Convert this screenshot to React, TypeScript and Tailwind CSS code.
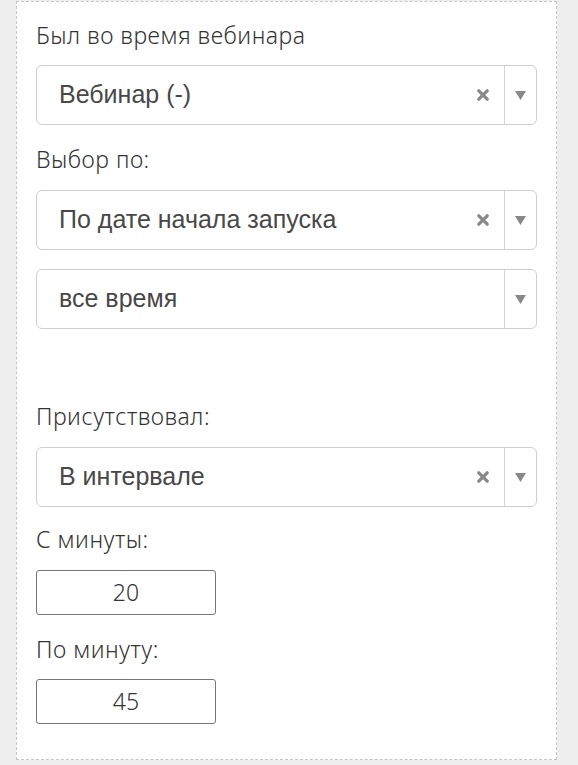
import React from "react";

function Label({ children }: { children: React.ReactNode }) {
  return (
    <div className="font-[family-name:'Noto_Sans',sans-serif] text-[23px] leading-[26px] font-light tracking-[0.5px] text-[#333]">
      {children}
    </div>
  );
}

function Select({ value, clearable = true }: { value: string; clearable?: boolean }) {
  return (
    <div className="flex h-[60px] w-full items-stretch rounded-[6px] border border-[#cfcfcf] bg-white">
      <div className="flex flex-1 items-center pl-[22px] font-[family-name:'Liberation_Sans',Arial,sans-serif] text-[25px] text-[#484848]">
        {value}
      </div>
      {clearable && (
        <div className="mr-[15px] flex items-center">
          <svg width="12" height="12" viewBox="0 0 12 12">
            <path d="M1.8 1.8 L10.2 10.2 M10.2 1.8 L1.8 10.2" stroke="#888" strokeWidth="3.2" strokeLinecap="round" />
          </svg>
        </div>
      )}
      <div className="flex w-[32px] items-center justify-center border-l border-[#d4d4d4]">
        <svg width="11" height="9" viewBox="0 0 11 9">
          <path d="M0 0 H11 L5.5 9 Z" fill="#888" />
        </svg>
      </div>
    </div>
  );
}

function NumInput({ value }: { value: string }) {
  return (
    <div className="flex h-[45px] w-[180px] items-center justify-center rounded-[3px] border border-[#777] bg-white font-[family-name:'Noto_Sans',sans-serif] text-[23px] font-light text-[#333]">
      {value}
    </div>
  );
}

export default function App() {
  return (
    <div className="min-h-[765px] bg-[#eeeeee] pl-[16px] pr-[21px] pt-px">
      <div className="flex flex-col border border-dashed border-[#c4c4c4] bg-white px-[19px] pb-[35px] pt-[20px]">
        <Label>Был во время вебинара</Label>
        <div className="mt-[17px]">
          <Select value="Вебинар (-)" />
        </div>
        <div className="mt-[21px]">
          <Label>Выбор по:</Label>
        </div>
        <div className="mt-[18px]">
          <Select value="По дате начала запуска" />
        </div>
        <div className="mt-[19px]">
          <Select value="все время" clearable={false} />
        </div>
        <div className="mt-[74px]">
          <Label>Присутствовал:</Label>
        </div>
        <div className="mt-[18px]">
          <Select value="В интервале" />
        </div>
        <div className="mt-[19px]">
          <Label>С минуты:</Label>
        </div>
        <div className="mt-[18px]">
          <NumInput value="20" />
        </div>
        <div className="mt-[21px]">
          <Label>По минуту:</Label>
        </div>
        <div className="mt-[17px]">
          <NumInput value="45" />
        </div>
      </div>
    </div>
  );
}
